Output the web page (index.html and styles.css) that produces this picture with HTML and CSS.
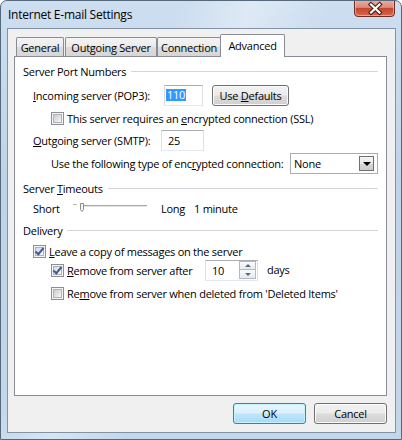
FILE: index.html
```html
<!DOCTYPE html>
<html lang="en">

<head>
    <meta charset="UTF-8">
    <title>Internet E-mail Settings</title>
    <link rel="stylesheet" href="styles.css">
</head>

<body>
    <div class="window">
        <div class="titlebar">
            <span class="title">Internet E-mail Settings</span>
            <div class="close">
                <svg width="41" height="17" viewBox="0 0 41 17">
                    <defs>
                        <linearGradient id="closeGrad" x1="0" y1="0" x2="0" y2="1">
                            <stop offset="0" stop-color="#eab0a4" />
                            <stop offset="0.45" stop-color="#d98a78" />
                            <stop offset="0.5" stop-color="#c4462e" />
                            <stop offset="1" stop-color="#d96a50" />
                        </linearGradient>
                    </defs>
                    <path d="M0.5 0 V13 Q0.5 16.5 4 16.5 H37 Q40.5 16.5 40.5 13 V0" fill="url(#closeGrad)" stroke="#6e2c22" />
                    <path d="M1.5 0 V12.5 Q1.5 15.5 4.5 15.5 H36.5 Q39.5 15.5 39.5 12.5 V0" fill="none" stroke="#f3c9bf" stroke-opacity="0.6" />
                    <path d="M17 4.5 L25.5 12.5 M25.5 4.5 L17 12.5" stroke="#4b1e18" stroke-width="4.4" stroke-linecap="square" />
                    <path d="M17 4.5 L25.5 12.5 M25.5 4.5 L17 12.5" stroke="#ffffff" stroke-width="2.2" stroke-linecap="square" />
                </svg>
            </div>
        </div>

        <div class="client">
            <div class="tabs">
                <div class="tab tab-general">General</div>
                <div class="tab tab-outgoing">Outgoing Server</div>
                <div class="tab tab-connection">Connection</div>
                <div class="tab tab-advanced active">Advanced</div>
            </div>

            <div class="panel">
                <!-- Server Port Numbers -->
                <div class="group row-ports">
                    <span>Server Port Numbers</span>
                    <i class="rule"></i>
                </div>
                <div class="row row-incoming indent-1">
                    <span class="label label-incoming"><u>I</u>ncoming server (POP3):</span>
                    <div class="field field-incoming"><span class="selected">110</span></div>
                    <div class="btn btn-defaults"><span>Use <u>D</u>efaults</span></div>
                </div>
                <div class="row row-ssl indent-2">
                    <span class="cb"></span>
                    <span class="cb-text">This server requires an <u>e</u>ncrypted connection (SSL)</span>
                </div>
                <div class="row row-outgoing indent-1">
                    <span class="label label-outgoing"><u>O</u>utgoing server (SMTP):</span>
                    <div class="field field-outgoing">25</div>
                </div>
                <div class="row row-encryption indent-2">
                    <span class="label label-encryption">Use the following type of enc<u>r</u>ypted connection:</span>
                    <div class="combo">
                        <span>None</span>
                        <i class="combo-arrow"></i>
                    </div>
                </div>

                <!-- Server Timeouts -->
                <div class="group row-timeouts">
                    <span>Server <u>T</u>imeouts</span>
                    <i class="rule"></i>
                </div>
                <div class="row row-slider indent-1">
                    <span class="label label-short">Short</span>
                    <svg class="slider" width="74" height="14" viewBox="0 0 74 14">
                        <path d="M0 3.5 H4" stroke="#b9b9b9" />
                        <rect x="7" y="4" width="67" height="1" fill="#a9a9a9" />
                        <rect x="7" y="5" width="67" height="1" fill="#e4e4e4" />
                        <path d="M7.5 2.5 H10.5 V8.5 L9 10.5 L7.5 8.5 Z" fill="#f4f4f4" stroke="#8c8c8c" />
                    </svg>
                    <span class="label label-long">Long</span>
                    <span>1 minute</span>
                </div>

                <!-- Delivery -->
                <div class="group row-delivery">
                    <span>Delivery</span>
                    <i class="rule"></i>
                </div>
                <div class="row row-leave indent-1">
                    <span class="cb checked"></span>
                    <span class="cb-text"><u>L</u>eave a copy of messages on the server</span>
                </div>
                <div class="row row-after indent-2">
                    <span class="cb checked"></span>
                    <span class="cb-text label-after"><u>R</u>emove from server after</span>
                    <div class="spin">
                        <span>10</span>
                        <div class="spin-btns">
                            <div class="spin-btn up"></div>
                            <div class="spin-btn down"></div>
                        </div>
                    </div>
                    <span class="days">days</span>
                </div>
                <div class="row row-deleted indent-2">
                    <span class="cb"></span>
                    <span class="cb-text">Re<u>m</u>ove from server when deleted from 'Deleted Items'</span>
                </div>
            </div>

            <div class="actions">
                <div class="btn btn-ok">OK</div>
                <div class="btn btn-cancel">Cancel</div>
            </div>
        </div>
    </div>
</body>

</html>
```

FILE: styles.css
```css
body {
    margin: 0;
    font-family: "Open Sans", "Liberation Sans", sans-serif;
    font-size: 11px;
    letter-spacing: -0.25px;
    color: #000000;
}

.window {
    width: 402px;
    height: 440px;
    box-sizing: border-box;
    border: 1px solid #56687c;
    border-radius: 7px 7px 0 0;
    background:
        linear-gradient(115deg, rgba(255, 255, 255, 0) 30%, rgba(255, 255, 255, 0.35) 42%, rgba(255, 255, 255, 0) 55%),
        linear-gradient(180deg, #cddef0 0%, #bfd3e8 40%, #c3d6ea 100%);
    display: flex;
    flex-direction: column;
    overflow: hidden;
}

/* title bar */
.titlebar {
    height: 27px;
    display: flex;
    justify-content: space-between;
    align-items: flex-start;
}

.title {
    font-size: 12px;
    padding: 6px 0 0 7px;
    line-height: 16px;
}

.close {
    margin-right: 6px;
    height: 17px;
    margin-top: -1px;
}

.close svg {
    display: block;
}

/* client area */
.client {
    width: 389px;
    height: 405px;
    box-sizing: border-box;
    margin-left: 6px;
    border: 1px solid #8393a6;
    background-color: #f0f0f0;
    padding: 5px 8px 8px 6px;
    display: flex;
    flex-direction: column;
}

.tabs {
    height: 22px;
    display: flex;
    align-items: flex-end;
    padding-left: 2px;
}

.tab {
    height: 19px;
    box-sizing: border-box;
    border: 1px solid #898c95;
    border-bottom: none;
    border-radius: 2px 2px 0 0;
    background: linear-gradient(180deg, #f4f4f4 0%, #ebebeb 50%, #dcdcdc 51%, #d6d6d6 100%);
    display: flex;
    align-items: center;
    justify-content: center;
    margin-left: -1px;
}

.tab-general {
    width: 48px;
    margin-left: 0;
    margin-right: 2px;
}

.tab-outgoing {
    width: 92px;
    margin-right: 1px;
}

.tab-connection {
    width: 64px;
}

.tab.active {
    width: 65px;
    height: 23px;
    margin-bottom: -1px;
    background: #ffffff;
    position: relative;
    z-index: 1;
    padding-bottom: 2px;
}

.panel {
    height: 340px;
    box-sizing: border-box;
    border: 1px solid #898c95;
    background-color: #ffffff;
    padding: 2px 8px 0 8px;
}

/* rows */
.row,
.group {
    display: flex;
    align-items: center;
}

.group .rule {
    flex: 1;
    height: 1px;
    margin-left: 5px;
    background-color: #d0d6dc;
}

.indent-1 {
    padding-left: 10px;
}

.indent-2 {
    padding-left: 28px;
}

.row-ports { height: 24px; }
.row-incoming { height: 24px; }
.row-ssl { height: 22px; }
.row-outgoing { height: 22px; }
.row-encryption { height: 24px; }
.row-timeouts { height: 26px; }
.row-slider { height: 14px; }
.row-delivery { height: 30px; }
.row-leave { height: 12px; }
.row-after { height: 26px; }
.row-deleted { height: 20px; }

.label-incoming { width: 131px; }
.label-outgoing { width: 128px; }
.label-encryption { width: 239px; }
.label-short { width: 40px; }
.label-long { width: 33px; margin-left: 14px; }
.label-after { width: 138px; }

.cb-text {
    margin-left: 3px;
    white-space: nowrap;
}

/* text fields */
.field,
.spin {
    height: 21px;
    box-sizing: border-box;
    border: 1px solid #dbdfe6;
    border-top-color: #abadb3;
    border-bottom-color: #e3e9ef;
    background-color: #ffffff;
    display: flex;
    align-items: center;
    padding-left: 1px;
}

.field-incoming {
    width: 39px;
}

.field-outgoing {
    width: 43px;
    padding-left: 6px;
}

.selected {
    background-color: #3399ff;
    color: #ffffff;
    padding: 0 1px;
    line-height: 12px;
}

/* combo box */
.combo {
    width: 88px;
    height: 21px;
    box-sizing: border-box;
    border: 1px solid #a7adb5;
    background-color: #ffffff;
    display: flex;
    align-items: center;
    padding-left: 3px;
}

.combo-arrow {
    margin-left: auto;
    margin-right: 3px;
    width: 15px;
    height: 15px;
    box-sizing: border-box;
    border: 1px solid #707070;
    background: linear-gradient(180deg, #f5f5f5 0%, #e8e8e8 50%, #d8d8d8 51%, #cdcdcd 100%);
    display: flex;
    align-items: center;
    justify-content: center;
}

.combo-arrow::before {
    content: "";
    border-left: 4px solid transparent;
    border-right: 4px solid transparent;
    border-top: 4px solid #000000;
    margin-top: 1px;
}

/* spin box */
.spin {
    width: 53px;
    padding-left: 6px;
    justify-content: space-between;
}

.spin-btns {
    display: flex;
    flex-direction: column;
    margin-right: 1px;
}

.spin-btn {
    width: 17px;
    height: 9px;
    box-sizing: border-box;
    border: 1px solid #b4b9c0;
    background: linear-gradient(180deg, #fbfbfb 0%, #e6e9ed 100%);
    display: flex;
    align-items: center;
    justify-content: center;
}

.spin-btn.down {
    border-top: none;
    height: 9px;
}

.spin-btn.up::before {
    content: "";
    border-left: 3px solid transparent;
    border-right: 3px solid transparent;
    border-bottom: 3px solid #4f6a8a;
}

.spin-btn.down::before {
    content: "";
    border-left: 3px solid transparent;
    border-right: 3px solid transparent;
    border-top: 3px solid #4f6a8a;
}

.days {
    margin-left: 9px;
    margin-top: -2px;
}

/* check boxes */
.cb {
    width: 13px;
    height: 13px;
    box-sizing: border-box;
    border: 1px solid #8e8f8f;
    background-color: #f4f4f4;
    position: relative;
    flex-shrink: 0;
}

.cb::before {
    content: "";
    position: absolute;
    left: 1px;
    top: 1px;
    right: 1px;
    bottom: 1px;
    border: 1px solid #aeb3b9;
    background: linear-gradient(135deg, #c8ccd2 0%, #f6f6f6 100%);
}

.cb.checked::before {
    background: linear-gradient(135deg, #d4dbe5 0%, #f7f9fb 100%);
}

.cb.checked::after {
    content: "";
    position: absolute;
    left: 3px;
    top: 0px;
    width: 3px;
    height: 7px;
    border-right: 2px solid #3e5c99;
    border-bottom: 2px solid #3e5c99;
    transform: rotate(40deg);
}

/* buttons */
.btn {
    height: 21px;
    box-sizing: border-box;
    border: 1px solid #707070;
    border-radius: 3px;
    background: linear-gradient(180deg, #f2f2f2 0%, #ebebeb 48%, #dddddd 52%, #cfcfcf 100%);
    box-shadow: inset 0 0 0 1px #fbfbfb;
    display: flex;
    align-items: center;
    justify-content: center;
}

.btn-defaults {
    width: 77px;
    margin-left: 9px;
}

.actions {
    display: flex;
    justify-content: flex-end;
    margin-top: 7px;
}

.btn-ok,
.btn-cancel {
    width: 73px;
}

.btn-ok {
    margin-right: 8px;
    border-color: #3c7fb1;
    background: linear-gradient(180deg, #eaf6fd 0%, #d9f0fc 48%, #bee6fd 52%, #a7d9f5 100%);
    box-shadow: inset 0 0 0 1px #c4f3fe;
}
```
